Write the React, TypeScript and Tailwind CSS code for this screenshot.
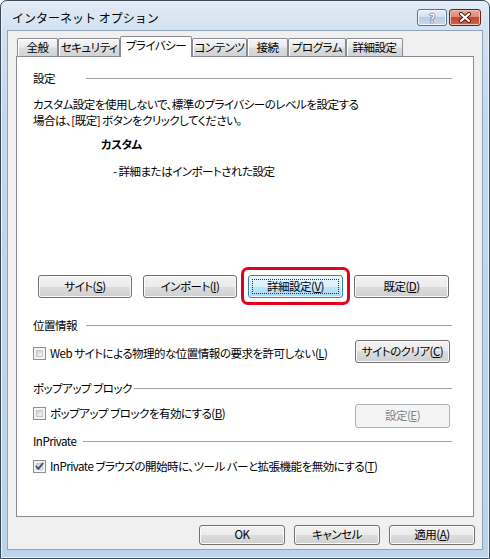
import React from "react";

type Kids = { children?: React.ReactNode; className?: string };

function Btn({ children, className = "" }: Kids) {
  return (
    <div
      className={
        "flex items-center justify-center whitespace-nowrap rounded-[3px] border border-[#707070] bg-[linear-gradient(180deg,#f2f2f2_0%,#ebebeb_50%,#dddddd_50%,#cfcfcf_100%)] shadow-[inset_0_0_0_1px_#fbfbfb] leading-none text-black shrink-0 " +
        className
      }
    >
      {children}
    </div>
  );
}

function DisabledBtn({ children, className = "" }: Kids) {
  return (
    <div
      className={
        "flex items-center justify-center whitespace-nowrap rounded-[3px] border border-[#adb2b5] bg-[#f4f4f4] leading-none text-[#838383] shrink-0 " +
        className
      }
    >
      {children}
    </div>
  );
}

function DefaultBtn({ children, className = "" }: Kids) {
  return (
    <div
      className={
        "flex items-center justify-center whitespace-nowrap rounded-[3px] border border-[#3c7fb1] bg-[linear-gradient(180deg,#eaf6fd_0%,#d9f0fc_50%,#bee6fd_50%,#a7d9f5_100%)] shadow-[inset_0_0_0_1px_#f0f9fe] p-[3px] shrink-0 " +
        className
      }
    >
      <div className="flex-1 self-stretch flex items-center justify-center border border-dotted border-[#333] leading-none text-black">
        {children}
      </div>
    </div>
  );
}

function Check({ checked = false }: { checked?: boolean }) {
  return (
    <div className="relative w-[13px] h-[13px] border border-[#8e8f8f] bg-[#f4f4f4] p-[2px] shrink-0">
      <div className="w-full h-full border border-[#c4c6c9] bg-[linear-gradient(135deg,#c9ccd1_0%,#e8e9eb_60%,#f7f7f7_100%)]" />
      {checked && (
        <svg className="absolute inset-0" width="11" height="11" viewBox="0 0 11 11">
          <path d="M2.2 5.4 L4.4 7.8 L8.8 2.4" fill="none" stroke="#3f5584" strokeWidth="1.9" strokeLinecap="round" strokeLinejoin="round" />
        </svg>
      )}
    </div>
  );
}

function Header({ label, labelClass = "", lineClass = "" }: { label: string; labelClass?: string; lineClass?: string }) {
  return (
    <div className="flex items-center h-[16px]">
      <span className={"shrink-0 whitespace-nowrap " + labelClass}>{label}</span>
      <div className={"flex-1 h-px bg-[#a0a0a0] " + lineClass} />
    </div>
  );
}

function Tab({ label, className = "" }: { label: string; className?: string }) {
  return (
    <div
      className={
        "h-[18px] flex items-center justify-center whitespace-nowrap border border-b-0 border-[#898c95] rounded-t-[2px] bg-[linear-gradient(180deg,#f5f5f5_0%,#ebebeb_45%,#dcdcdc_55%,#d2d2d2_100%)] shadow-[inset_1px_1px_0_#ffffff] leading-none " +
        className
      }
    >
      {label}
    </div>
  );
}

export default function App() {
  return (
    <div className="w-[490px] h-[559px] flex flex-col border border-[#3b4856] rounded-t-[7px] bg-[linear-gradient(180deg,#e2ebf6_0%,#d3e1f1_30px,#c3d7ed_120px,#bdd3ec_100%)] shadow-[inset_0_0_0_1px_#e9f1fa] font-['Noto_Sans_CJK_JP','Noto_Sans',sans-serif] text-black select-none overflow-hidden">
      {/* Title bar */}
      <div className="h-[29px] shrink-0 flex items-center pt-[4px] pl-[11px] pr-[8px]">
        <span className="text-[12px] leading-none text-black whitespace-nowrap">インターネット オプション</span>
        <div className="ml-auto flex items-center gap-[2px]">
          <div className="w-[30px] h-[17px] rounded-[3px] border border-[#56708f] bg-[linear-gradient(180deg,#e8eff8_0%,#d4e1f0_45%,#b8cde5_50%,#c6d8ee_100%)] shadow-[inset_0_0_0_1px_#f3f7fc] flex items-center justify-center">
            <span className="text-[12px] font-bold leading-none text-white [text-shadow:0_0_1px_#3a4a60,0_0_1px_#3a4a60,0_0_1px_#3a4a60]">?</span>
          </div>
          <div className="w-[32px] h-[17px] rounded-[3px] border border-[#5a261c] bg-[linear-gradient(180deg,#e9a99b_0%,#dd8a78_45%,#c7462f_50%,#d0634d_100%)] shadow-[inset_0_0_0_1px_#f1c2b6] flex items-center justify-center">
            <svg width="14" height="11" viewBox="0 0 14 11">
              <path d="M3 2 L11 9 M11 2 L3 9" stroke="#4d1a12" strokeWidth="4" strokeLinecap="round" />
              <path d="M3 2 L11 9 M11 2 L3 9" stroke="#ffffff" strokeWidth="2.2" strokeLinecap="round" />
            </svg>
          </div>
        </div>
      </div>

      {/* Client area */}
      <div className="mx-[6px] h-[520px] shrink-0 border border-[#8fa3b9] bg-[#f0f0f0] flex flex-col text-[11.5px] tracking-[-0.5px] leading-[16px] [font-feature-settings:'palt']">
        {/* Tabs */}
        <div className="h-[25px] shrink-0 flex items-end pl-[9px]">
          <Tab label="全般" className="w-[41px]" />
          <Tab label="セキュリティ" className="w-[62px]" />
          <div className="relative z-10 -mb-px h-[21px] w-[72px] flex items-center justify-center whitespace-nowrap pb-[2px] border border-b-0 border-[#898c95] rounded-t-[2px] bg-white leading-none">
            プライバシー
          </div>
          <Tab label="コンテンツ" className="w-[55px]" />
          <Tab label="接続" className="w-[41px]" />
          <Tab label="プログラム" className="w-[58px]" />
          <Tab label="詳細設定" className="w-[57px]" />
        </div>

        {/* Panel */}
        <div className="mx-[8px] h-[461px] shrink-0 border border-[#898c95] bg-white flex flex-col pl-[16px] pr-[21px]">
          <div className="mt-[13px]">
            <Header label="設定" labelClass="min-w-[53px]" />
          </div>
          <div className="mt-[10px] leading-[16px] whitespace-nowrap">
            <div>カスタム設定を使用しないで、標準のプライバシーのレベルを設定する</div>
            <div>場合は、[既定] ボタンをクリックしてください。</div>
          </div>
          <div className="mt-[8px] pl-[68px] h-[16px] font-bold whitespace-nowrap">カスタム</div>
          <div className="mt-[11px] pl-[80px] h-[16px] whitespace-nowrap">- 詳細またはインポートされた設定</div>

          <div className="mt-[96px] h-[23px] flex items-center gap-[11px] pl-[5px]">
            <Btn className="w-[94px] h-[23px]">
              <span>
                サイト(<span className="underline">S</span>)
              </span>
            </Btn>
            <Btn className="w-[94px] h-[23px]">
              <span>
                インポート(<span className="underline">I</span>)
              </span>
            </Btn>
            <div className="relative">
              <div className="absolute -left-[7px] -right-[7px] -top-[8px] -bottom-[7px] border-[3px] border-[#e3001b] rounded-[7px]" />
              <DefaultBtn className="w-[95px] h-[23px]">
                <span>
                  詳細設定(<span className="underline">V</span>)
                </span>
              </DefaultBtn>
            </div>
            <Btn className="w-[95px] h-[23px]">
              <span>
                既定(<span className="underline">D</span>)
              </span>
            </Btn>
          </div>

          <div className="mt-[19px]">
            <Header label="位置情報" labelClass="min-w-[53px]" />
          </div>
          <div className="mt-[7px] h-[23px] flex items-start justify-between">
            <div className="mt-[7px] h-[13px] flex items-center gap-[4px]">
              <Check />
              <span className="leading-none whitespace-nowrap">
                Web サイトによる物理的な位置情報の要求を許可しない(<span className="underline">L</span>)
              </span>
            </div>
            <Btn className="w-[95px] h-[23px] mr-[2px]">
              <span>
                サイトのクリア(<span className="underline">C</span>)
              </span>
            </Btn>
          </div>

          <div className="mt-[17px]">
            <Header label="ポップアップ ブロック" lineClass="ml-[2px]" />
          </div>
          <div className="mt-[8px] h-[24px] flex items-start justify-between">
            <div className="mt-[3px] h-[13px] flex items-center gap-[4px]">
              <Check />
              <span className="leading-none whitespace-nowrap">
                ポップアップ ブロックを有効にする(<span className="underline">B</span>)
              </span>
            </div>
            <DisabledBtn className="w-[95px] h-[24px] mr-[2px]">
              <span>
                設定(<span className="underline">E</span>)
              </span>
            </DisabledBtn>
          </div>

          <div className="mt-[5px]">
            <Header label="InPrivate" lineClass="ml-[7px]" />
          </div>
          <div className="mt-[11px] h-[13px] flex items-center gap-[4px]">
            <Check checked />
            <span className="leading-none whitespace-nowrap">
              InPrivate ブラウズの開始時に、ツール バーと拡張機能を無効にする(<span className="underline">T</span>)
            </span>
          </div>
        </div>

        {/* Bottom buttons */}
        <div className="mt-[8px] h-[20px] shrink-0 flex justify-end gap-[9px] pr-[7px]">
          <Btn className="w-[86px] h-[20px]">OK</Btn>
          <Btn className="w-[86px] h-[20px]">キャンセル</Btn>
          <Btn className="w-[86px] h-[20px]">
            <span>
              適用(<span className="underline">A</span>)
            </span>
          </Btn>
        </div>
      </div>
    </div>
  );
}
